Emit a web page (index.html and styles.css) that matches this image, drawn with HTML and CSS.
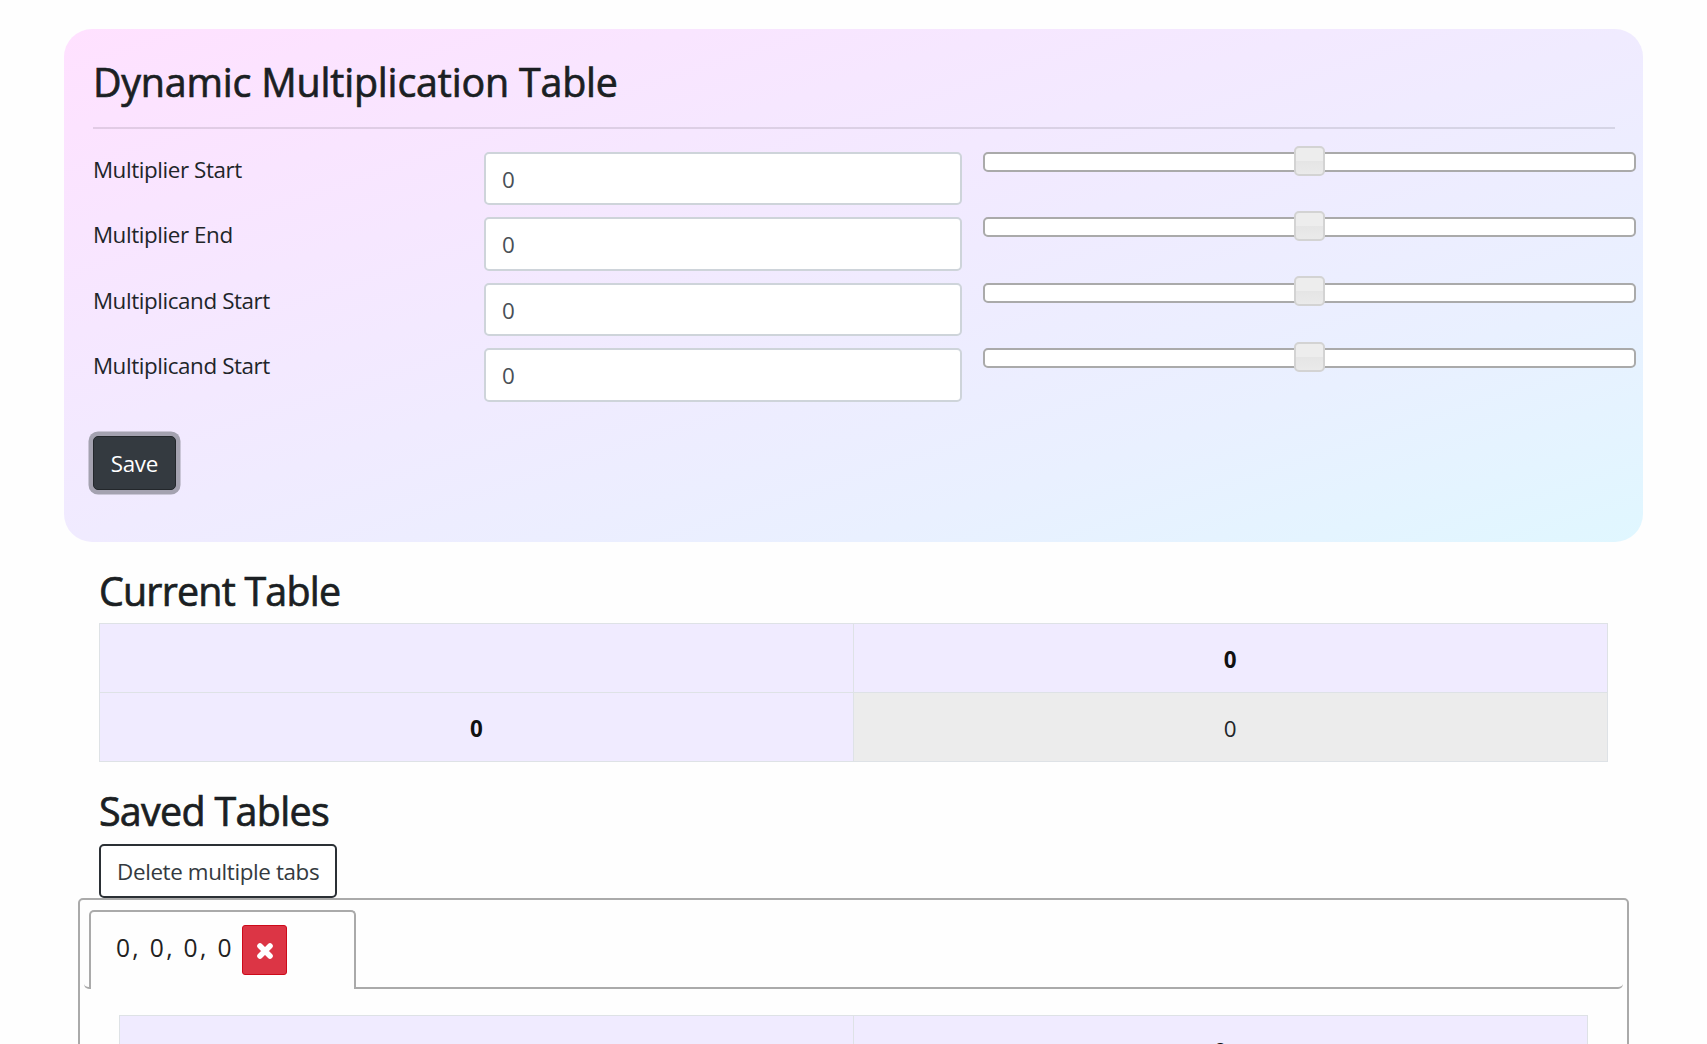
FILE: index.html
```
<!DOCTYPE html>
<html lang="en">
<head>
<meta charset="utf-8">
<title>Dynamic Multiplication Table</title>
<link rel="stylesheet" href="styles.css">
</head>
<body>
<main class="page">
  <section class="card">
    <h1 class="heading"><span class="t-title">Dynamic Multiplication Table</span></h1>
    <hr class="rule">
    <form class="fields">
      <div class="field"><label>Multiplier Start</label><div class="input">0</div><div class="slider"><span class="handle"></span></div></div>
      <div class="field"><label>Multiplier End</label><div class="input">0</div><div class="slider"><span class="handle"></span></div></div>
      <div class="field"><label>Multiplicand Start</label><div class="input">0</div><div class="slider"><span class="handle"></span></div></div>
      <div class="field"><label>Multiplicand Start</label><div class="input">0</div><div class="slider"><span class="handle"></span></div></div>
    </form>
    <button class="save" type="button">Save</button>
  </section>
  <section class="current">
    <h2 class="heading"><span class="t-current">Current Table</span></h2>
    <div class="grid">
      <div class="cell"></div><div class="cell head">0</div>
      <div class="cell head">0</div><div class="cell value">0</div>
    </div>
  </section>
  <section class="saved">
    <h2 class="heading"><span class="t-saved">Saved Tables</span></h2>
    <button class="delete" type="button">Delete multiple tabs</button>
  </section>
  <section class="tabs">
    <div class="nav">
      <div class="tab">
        <span class="tab-name">0, 0, 0, 0</span>
        <button class="close" type="button" aria-label="Close tab"><svg viewBox="0 0 18 18" width="18" height="18"><path d="M4 4 14 14M14 4 4 14" stroke="#fff" stroke-width="5.6" stroke-linecap="round"/></svg></button>
      </div>
    </div>
    <div class="panel">
      <div class="grid">
        <div class="cell"></div><div class="cell head">0</div>
      </div>
    </div>
  </section>
</main>
</body>
</html>
```
FILE: styles.css
```
* { box-sizing: border-box; }
body {
  margin: 0;
  height: 1044px;
  overflow: hidden;
  background: #fefefe;
  color: #212529;
  font-family: "Open Sans", "Noto Sans", sans-serif;
  font-size: 22.4px;
  line-height: 34px;
}
button { font: inherit; margin: 0; padding: 0; }
.page { height: 1044px; overflow: hidden; padding: 28.5px 64px 0 64.4px; }
.card {
  height: 513px;
  padding: 28.5px 28.5px 0;
  border-radius: 28px;
  background: linear-gradient(to bottom right, #ffe1ff, #f0ebff 50%, #e9f0ff 75%, #e0f7ff);
}
.heading {
  margin: 0;
  height: 48px;
  font-size: 39.4px;
  font-weight: 400;
  line-height: 50px;
  white-space: nowrap;
  color: #1b1f23;
  -webkit-text-stroke: .7px #1b1f23;
}
.t-title { letter-spacing: -.18px; }
.t-current { letter-spacing: -.77px; }
.t-saved { letter-spacing: -.66px; }
.rule { margin: 22px 0 0; border: 0; height: 2px; background: rgba(0, 0, 0, .1); }
.fields { margin-top: 23px; display: flex; flex-direction: column; gap: 12px; }
.field {
  display: grid;
  grid-template-columns: 391px 478.5px 652.5px;
  height: 53.4px;
  align-items: start;
}
.field label { line-height: 36px; white-space: nowrap; letter-spacing: -.41px; }
.input {
  height: 53.4px;
  padding-left: 16px;
  border: 2px solid #ced4da;
  border-radius: 5px;
  background: #fff;
  color: #495057;
  line-height: 51px;
}
.slider {
  width: 652.5px;
  margin-left: 21px;
  height: 20px;
  border: 2px solid #aaa;
  border-radius: 5px;
  background: #fff;
  display: flex;
  justify-content: center;
  align-items: center;
}
.handle {
  width: 31px;
  height: 30px;
  flex: none;
  margin-top: -3px;
  border: 2px solid #d3d3d3;
  border-radius: 5px;
  background: linear-gradient(#ededed 50%, #e5e5e5 50%, #eaeaea);
}
.save {
  display: block;
  width: 83px;
  height: 54px;
  margin-top: 34px;
  padding-top: 2px;
  border: 1.5px solid #23272b;
  border-radius: 5px;
  background: #343a40;
  box-shadow: 0 0 0 4.5px #a4a2b0;
  color: #fff;
  letter-spacing: -.3px;
}
.current { padding: 24px 35.5px 0 34.5px; }
.current .grid { margin-top: 9.6px; }
.grid {
  display: grid;
  grid-template-columns: 1fr 1fr;
  grid-auto-rows: 68px;
  gap: 1px;
  border: 1px solid #dee2e6;
  background: #dee2e6;
  text-align: center;
}
.cell { background: #f0ebff; line-height: 72px; }
.head { font-weight: 700; color: #111; }
.value { background: #ececec; }
.saved { padding: 24px 35px 0 34.5px; }
.delete {
  display: block;
  width: 238.5px;
  height: 54px;
  margin-top: 10px;
  padding-top: 2px;
  border: 2px solid #2b3035;
  border-radius: 5px;
  background: #fff;
  color: #343a40;
  letter-spacing: -.38px;
}
.tabs {
  height: 400px;
  margin: 0 14.5px 0 13.5px;
  padding: 4px;
  border: 2px solid #aaa;
  border-radius: 5px;
}
.nav {
  height: 85px;
  padding: 6px 0 0 5px;
  border-bottom: 2px solid #aaa;
  border-radius: 5px;
}
.tab {
  width: 267.5px;
  height: 79px;
  padding: 13px 0 0 25px;
  display: flex;
  align-items: flex-start;
  border: 2px solid #aaa;
  border-bottom: 0;
  border-radius: 5px 5px 0 0;
  background: #fefefe;
}
.tab-name {
  width: 126.3px;
  flex: none;
  font-size: 24.6px;
  line-height: 46px;
  letter-spacing: 2.35px;
  white-space: nowrap;
  color: #212121;
}
.close {
  width: 45px;
  height: 50px;
  display: grid;
  place-items: center;
  padding-top: 2px;
  border: 1px solid #cd0a1a;
  border-radius: 3px;
  background: #dc3545;
}
.panel { padding: 26px 34.5px 0 35.2px; }
```
